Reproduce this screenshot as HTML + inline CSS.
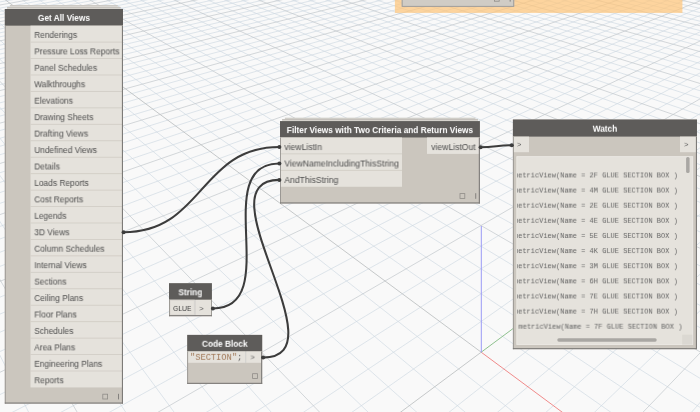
<!DOCTYPE html>
<html><head><meta charset="utf-8"><title>Dynamo</title>
<style>
html,body{margin:0;padding:0}
body{width:700px;height:412px;overflow:hidden;background:#f9f9f9;position:relative;font-family:"Liberation Sans",sans-serif;}
.grid{position:absolute;left:0;top:0}
.abs{position:absolute}
#root{position:absolute;left:0;top:0;width:700px;height:412px;will-change:transform}
.ic{position:absolute;border:1px solid #8f8c88;box-sizing:border-box;width:5.6px;height:5.6px}
.bar{position:absolute;width:1px;height:5.6px;background:#7c7a77}
.wires{position:absolute;left:0;top:0}
</style></head><body>
<svg class="grid" width="700" height="412" viewBox="0 0 700 412">
<path d="M31.1 417.0L-5.0 345.6M128.9 417.0L-5.0 214.1M177.7 417.0L-5.0 168.9M226.6 417.0L-5.0 132.2M275.5 417.0L-5.0 101.9M373.2 417.0L-5.0 54.6M422.1 417.0L-5.0 35.8M471.0 417.0L-5.0 19.4M519.8 417.0L-5.0 5.0M617.6 417.0L15.3 -5.0M666.4 417.0L31.8 -5.0M705.0 410.5L48.2 -5.0M705.0 381.3L64.7 -5.0M705.0 330.4L97.7 -5.0M705.0 308.0L114.2 -5.0M705.0 287.4L130.7 -5.0M705.0 268.3L147.2 -5.0M705.0 234.2L180.1 -5.0M705.0 218.8L196.6 -5.0M705.0 204.5L213.1 -5.0M705.0 191.1L229.6 -5.0M705.0 166.6L262.5 -5.0M705.0 155.4L279.0 -5.0M705.0 144.9L295.5 -5.0M705.0 134.9L312.0 -5.0M705.0 116.6L345.0 -5.0M705.0 108.1L361.4 -5.0M705.0 100.0L377.9 -5.0M705.0 92.3L394.4 -5.0M705.0 78.0L427.4 -5.0M705.0 71.3L443.9 -5.0M705.0 64.9L460.3 -5.0M705.0 58.8L476.8 -5.0M705.0 47.3L509.8 -5.0M705.0 42.0L526.3 -5.0M705.0 36.8L542.8 -5.0M705.0 31.8L559.3 -5.0M705.0 22.4L592.2 -5.0M705.0 18.0L608.7 -5.0M705.0 13.7L625.2 -5.0M705.0 9.6L641.7 -5.0M705.0 1.8L674.6 -5.0M705.0 -2.0L691.1 -5.0M-5.0 -3.1L6.0 -5.0M-5.0 -0.2L22.5 -5.0M-5.0 2.8L39.0 -5.0M-5.0 9.0L72.0 -5.0M-5.0 12.3L88.5 -5.0M-5.0 15.6L104.9 -5.0M-5.0 19.0L121.4 -5.0M-5.0 26.2L154.4 -5.0M-5.0 30.0L170.9 -5.0M-5.0 33.8L187.4 -5.0M-5.0 37.8L203.8 -5.0M-5.0 46.2L236.8 -5.0M-5.0 50.6L253.3 -5.0M-5.0 55.1L269.8 -5.0M-5.0 59.8L286.3 -5.0M-5.0 69.7L319.2 -5.0M-5.0 74.9L335.7 -5.0M-5.0 80.3L352.2 -5.0M-5.0 85.9L368.7 -5.0M-5.0 97.8L401.6 -5.0M-5.0 104.1L418.1 -5.0M-5.0 110.6L434.6 -5.0M-5.0 117.4L451.1 -5.0M-5.0 131.9L484.1 -5.0M-5.0 139.7L500.6 -5.0M-5.0 147.7L517.0 -5.0M-5.0 156.2L533.5 -5.0M-5.0 174.3L566.5 -5.0M-5.0 184.0L583.0 -5.0M-5.0 194.2L599.5 -5.0M-5.0 205.0L615.9 -5.0M-5.0 228.2L648.9 -5.0M-5.0 240.8L665.4 -5.0M-5.0 254.1L681.9 -5.0M-5.0 268.3L698.4 -5.0M-5.0 299.2L705.0 5.9M-5.0 316.2L705.0 13.3M-5.0 334.4L705.0 21.2M-5.0 353.8L705.0 29.6M-5.0 397.0L705.0 48.4M3.1 417.0L705.0 58.9M52.0 417.0L705.0 70.3M100.9 417.0L705.0 82.6M198.6 417.0L705.0 110.7M247.5 417.0L705.0 126.7M296.4 417.0L705.0 144.5M345.2 417.0L705.0 164.1M443.0 417.0L705.0 210.6M491.8 417.0L705.0 238.2M540.7 417.0L705.0 269.8M589.6 417.0L705.0 305.9M687.3 417.0L705.0 397.0" stroke="#cdd9e2" stroke-width="0.65" fill="none"/>
<path d="M80.0 417.0L-5.0 271.2M324.3 417.0L-5.0 76.3M705.0 354.7L81.2 -5.0M705.0 250.6L163.6 -5.0M705.0 178.5L246.1 -5.0M705.0 125.5L328.5 -5.0M705.0 85.0L410.9 -5.0M705.0 53.0L493.3 -5.0M705.0 27.0L575.7 -5.0M705.0 5.6L658.2 -5.0M-5.0 5.9L55.5 -5.0M-5.0 22.6L137.9 -5.0M-5.0 41.9L220.3 -5.0M-5.0 64.7L302.7 -5.0M-5.0 91.8L385.2 -5.0M-5.0 124.5L467.6 -5.0M-5.0 165.0L550.0 -5.0M-5.0 216.3L632.4 -5.0M-5.0 283.3L705.0 -1.1M-5.0 374.6L705.0 38.7M149.8 417.0L705.0 96.0M638.4 417.0L705.0 347.8" stroke="#c2c7cb" stroke-width="0.7" fill="none"/>
<path d="M481.2 352.2L-1.2 -5.0M481.2 352.2L394.1 417.0" stroke="#bcbfc1" stroke-width="0.85" fill="none"/>
<path d="M481.2 352.2L568.7 417.0" stroke="#f08a8a" stroke-width="1" fill="none"/>
<path d="M481.2 352.2L580.5 278.5" stroke="#8fc28f" stroke-width="1" fill="none"/>
<path d="M481.3 352.3L481.3 226" stroke="#9a9af5" stroke-width="1" fill="none"/>
</svg>
<svg class="grid" width="700" height="412" viewBox="0 0 700 412">
<rect x="394.90" y="0.00" width="287.50" height="12.90" fill="#ffc477" fill-opacity="0.70"/>
<rect x="401.70" y="-5.00" width="112.50" height="11.80" fill="#d0ccc5"/>
<rect x="402.15" y="-4.55" width="111.60" height="10.90" fill="none" stroke="#9a9895" stroke-width="0.9"/>
<rect x="494.40" y="-3.60" width="4.8" height="4.8" fill="none" stroke="#8f8c88" stroke-width="0.8"/><rect x="509.70" y="-4.00" width="0.9" height="5.6" fill="#7c7a77"/>
<rect x="9.90" y="5.30" width="107.80" height="2.70" fill="#dddad5"/>
<rect x="9.90" y="5.20" width="107.80" height="0.70" fill="#c4c1bb"/>
<rect x="7.00" y="7.00" width="113.60" height="3.00" fill="#d6d3cd"/>
<rect x="7.00" y="6.90" width="113.60" height="0.70" fill="#bab7b1"/>
<rect x="4.80" y="9.00" width="118.20" height="394.60" fill="#cbc6be"/>
<rect x="4.80" y="9.00" width="118.20" height="16.65" fill="#5e5c5a"/>
<rect x="30.50" y="25.65" width="92.50" height="16.45" fill="#e5e2dc"/>
<rect x="30.50" y="42.09" width="92.50" height="16.45" fill="#e5e2dc"/>
<rect x="30.50" y="41.64" width="92.50" height="0.90" fill="#d3cfc8"/>
<rect x="30.50" y="58.54" width="92.50" height="16.45" fill="#e5e2dc"/>
<rect x="30.50" y="58.09" width="92.50" height="0.90" fill="#d3cfc8"/>
<rect x="30.50" y="74.98" width="92.50" height="16.45" fill="#e5e2dc"/>
<rect x="30.50" y="74.53" width="92.50" height="0.90" fill="#d3cfc8"/>
<rect x="30.50" y="91.43" width="92.50" height="16.44" fill="#e5e2dc"/>
<rect x="30.50" y="90.98" width="92.50" height="0.90" fill="#d3cfc8"/>
<rect x="30.50" y="107.88" width="92.50" height="16.44" fill="#e5e2dc"/>
<rect x="30.50" y="107.42" width="92.50" height="0.90" fill="#d3cfc8"/>
<rect x="30.50" y="124.32" width="92.50" height="16.45" fill="#e5e2dc"/>
<rect x="30.50" y="123.87" width="92.50" height="0.90" fill="#d3cfc8"/>
<rect x="30.50" y="140.77" width="92.50" height="16.44" fill="#e5e2dc"/>
<rect x="30.50" y="140.32" width="92.50" height="0.90" fill="#d3cfc8"/>
<rect x="30.50" y="157.21" width="92.50" height="16.44" fill="#e5e2dc"/>
<rect x="30.50" y="156.76" width="92.50" height="0.90" fill="#d3cfc8"/>
<rect x="30.50" y="173.66" width="92.50" height="16.44" fill="#e5e2dc"/>
<rect x="30.50" y="173.21" width="92.50" height="0.90" fill="#d3cfc8"/>
<rect x="30.50" y="190.10" width="92.50" height="16.45" fill="#e5e2dc"/>
<rect x="30.50" y="189.65" width="92.50" height="0.90" fill="#d3cfc8"/>
<rect x="30.50" y="206.55" width="92.50" height="16.44" fill="#e5e2dc"/>
<rect x="30.50" y="206.10" width="92.50" height="0.90" fill="#d3cfc8"/>
<rect x="30.50" y="222.99" width="92.50" height="16.44" fill="#e5e2dc"/>
<rect x="30.50" y="222.54" width="92.50" height="0.90" fill="#d3cfc8"/>
<rect x="30.50" y="239.44" width="92.50" height="16.45" fill="#e5e2dc"/>
<rect x="30.50" y="238.99" width="92.50" height="0.90" fill="#d3cfc8"/>
<rect x="30.50" y="255.88" width="92.50" height="16.44" fill="#e5e2dc"/>
<rect x="30.50" y="255.43" width="92.50" height="0.90" fill="#d3cfc8"/>
<rect x="30.50" y="272.32" width="92.50" height="16.44" fill="#e5e2dc"/>
<rect x="30.50" y="271.88" width="92.50" height="0.90" fill="#d3cfc8"/>
<rect x="30.50" y="288.77" width="92.50" height="16.44" fill="#e5e2dc"/>
<rect x="30.50" y="288.32" width="92.50" height="0.90" fill="#d3cfc8"/>
<rect x="30.50" y="305.21" width="92.50" height="16.44" fill="#e5e2dc"/>
<rect x="30.50" y="304.76" width="92.50" height="0.90" fill="#d3cfc8"/>
<rect x="30.50" y="321.66" width="92.50" height="16.44" fill="#e5e2dc"/>
<rect x="30.50" y="321.21" width="92.50" height="0.90" fill="#d3cfc8"/>
<rect x="30.50" y="338.10" width="92.50" height="16.44" fill="#e5e2dc"/>
<rect x="30.50" y="337.65" width="92.50" height="0.90" fill="#d3cfc8"/>
<rect x="30.50" y="354.55" width="92.50" height="16.45" fill="#e5e2dc"/>
<rect x="30.50" y="354.10" width="92.50" height="0.90" fill="#d3cfc8"/>
<rect x="30.50" y="371.00" width="92.50" height="16.44" fill="#e5e2dc"/>
<rect x="30.50" y="370.55" width="92.50" height="0.90" fill="#d3cfc8"/>
<rect x="4.80" y="25.65" width="0.90" height="377.95" fill="#96938f"/>
<rect x="121.90" y="25.65" width="1.10" height="377.95" fill="#7d7b78"/>
<rect x="4.80" y="402.50" width="118.20" height="1.10" fill="#7d7b78"/>
<rect x="102.80" y="394.20" width="4.8" height="4.8" fill="none" stroke="#8f8c88" stroke-width="0.8"/><rect x="118.10" y="393.80" width="0.9" height="5.6" fill="#7c7a77"/>
<rect x="284.90" y="117.90" width="190.50" height="3.60" fill="#dddad5"/>
<rect x="284.90" y="117.80" width="190.50" height="0.70" fill="#c4c1bb"/>
<rect x="282.10" y="119.30" width="195.90" height="2.70" fill="#d6d3cd"/>
<rect x="282.10" y="119.20" width="195.90" height="0.70" fill="#bab7b1"/>
<rect x="280.00" y="121.10" width="199.90" height="82.40" fill="#cbc6be"/>
<rect x="280.00" y="121.10" width="199.90" height="16.35" fill="#5e5c5a"/>
<rect x="280.00" y="137.45" width="122.00" height="16.44" fill="#e5e2dc"/>
<rect x="280.00" y="153.89" width="122.00" height="16.44" fill="#e5e2dc"/>
<rect x="280.00" y="153.44" width="122.00" height="0.90" fill="#d3cfc8"/>
<rect x="280.00" y="170.34" width="122.00" height="16.44" fill="#e5e2dc"/>
<rect x="280.00" y="169.89" width="122.00" height="0.90" fill="#d3cfc8"/>
<rect x="427.00" y="137.45" width="52.90" height="16.45" fill="#e5e2dc"/>
<rect x="280.00" y="137.45" width="0.90" height="66.05" fill="#96938f"/>
<rect x="478.80" y="137.45" width="1.10" height="66.05" fill="#7d7b78"/>
<rect x="280.00" y="202.40" width="199.90" height="1.10" fill="#7d7b78"/>
<rect x="460.00" y="193.60" width="4.8" height="4.8" fill="none" stroke="#8f8c88" stroke-width="0.8"/><rect x="475.30" y="193.20" width="0.9" height="5.6" fill="#7c7a77"/>
<rect x="512.90" y="119.50" width="184.10" height="229.70" fill="#cbc6be"/>
<rect x="512.90" y="119.50" width="184.10" height="17.10" fill="#5e5c5a"/>
<rect x="512.90" y="136.60" width="16.10" height="15.60" fill="#e5e2dc"/>
<rect x="680.00" y="136.60" width="17.00" height="15.60" fill="#e5e2dc"/>
<rect x="516.50" y="156.30" width="176.60" height="188.70" fill="#e5e2dc"/>
<rect x="516.90" y="156.70" width="175.80" height="187.90" fill="none" stroke="#ebe9e4" stroke-width="0.8"/>
<rect x="686.10" y="157.00" width="3.50" height="16.00" fill="#a9a7a3" rx="1.6"/>
<rect x="557.30" y="338.20" width="99.40" height="3.50" fill="#a9a7a3" rx="1.6"/>
<rect x="682.20" y="334.70" width="10.10" height="9.90" fill="#dbd8d2"/>
<rect x="512.90" y="136.50" width="0.90" height="212.70" fill="#96938f"/>
<rect x="695.90" y="136.50" width="1.10" height="212.70" fill="#7d7b78"/>
<rect x="512.90" y="348.10" width="184.10" height="1.10" fill="#7d7b78"/>
<rect x="169.00" y="283.20" width="42.90" height="33.00" fill="#cbc6be"/>
<rect x="169.00" y="283.20" width="42.90" height="16.60" fill="#5e5c5a"/>
<rect x="169.00" y="299.80" width="25.70" height="16.40" fill="#e5e2dc"/>
<rect x="170.00" y="300.20" width="24.30" height="14.80" fill="none" stroke="#d6d3cd" stroke-width="0.8"/>
<rect x="194.70" y="299.80" width="0.90" height="16.40" fill="#d4d6d6"/>
<rect x="195.60" y="299.80" width="16.30" height="16.40" fill="#e5e2dc"/>
<rect x="169.00" y="299.80" width="0.90" height="16.40" fill="#96938f"/>
<rect x="211.00" y="299.80" width="0.90" height="16.40" fill="#96938f"/>
<rect x="169.00" y="315.10" width="42.90" height="1.10" fill="#7d7b78"/>
<rect x="187.20" y="334.90" width="75.00" height="49.00" fill="#cbc6be"/>
<rect x="187.20" y="334.90" width="75.00" height="16.50" fill="#5e5c5a"/>
<rect x="187.20" y="351.40" width="58.20" height="11.40" fill="#e5e2dc"/>
<rect x="245.40" y="351.40" width="0.80" height="11.40" fill="#d4d6d6"/>
<rect x="246.20" y="351.40" width="16.00" height="11.40" fill="#e5e2dc"/>
<rect x="187.20" y="351.40" width="0.90" height="32.50" fill="#96938f"/>
<rect x="261.10" y="351.40" width="1.10" height="32.50" fill="#7d7b78"/>
<rect x="187.20" y="382.80" width="75.00" height="1.10" fill="#7d7b78"/>
<rect x="252.60" y="373.70" width="4.8" height="4.8" fill="none" stroke="#8f8c88" stroke-width="0.8"/>
</svg>
<div id="root">
<div class="abs" style="left:-87px;top:11px;font-size:8.3px;line-height:12.0px;color:#fff;font-weight:bold;font-family:'Liberation Sans',sans-serif;white-space:pre;will-change:transform;width:300px;text-align:center;transform:translate(0.90px,0.92px) rotate(0.01deg);transform-origin:50% 50%;">Get All Views</div>
<div class="abs" style="left:34px;top:28px;font-size:8.4px;line-height:12.0px;color:#4c4c4c;font-weight:normal;font-family:'Liberation Sans',sans-serif;white-space:pre;will-change:transform;transform:translate(0.30px,0.94px) rotate(0.01deg);transform-origin:0 50%;">Renderings</div>
<div class="abs" style="left:34px;top:45px;font-size:8.4px;line-height:12.0px;color:#4c4c4c;font-weight:normal;font-family:'Liberation Sans',sans-serif;white-space:pre;will-change:transform;transform:translate(0.30px,0.38px) rotate(0.01deg);transform-origin:0 50%;">Pressure Loss Reports</div>
<div class="abs" style="left:34px;top:61px;font-size:8.4px;line-height:12.0px;color:#4c4c4c;font-weight:normal;font-family:'Liberation Sans',sans-serif;white-space:pre;will-change:transform;transform:translate(0.30px,0.83px) rotate(0.01deg);transform-origin:0 50%;">Panel Schedules</div>
<div class="abs" style="left:34px;top:78px;font-size:8.4px;line-height:12.0px;color:#4c4c4c;font-weight:normal;font-family:'Liberation Sans',sans-serif;white-space:pre;will-change:transform;transform:translate(0.30px,0.27px) rotate(0.01deg);transform-origin:0 50%;">Walkthroughs</div>
<div class="abs" style="left:34px;top:94px;font-size:8.4px;line-height:12.0px;color:#4c4c4c;font-weight:normal;font-family:'Liberation Sans',sans-serif;white-space:pre;will-change:transform;transform:translate(0.30px,0.72px) rotate(0.01deg);transform-origin:0 50%;">Elevations</div>
<div class="abs" style="left:34px;top:111px;font-size:8.4px;line-height:12.0px;color:#4c4c4c;font-weight:normal;font-family:'Liberation Sans',sans-serif;white-space:pre;will-change:transform;transform:translate(0.30px,0.16px) rotate(0.01deg);transform-origin:0 50%;">Drawing Sheets</div>
<div class="abs" style="left:34px;top:127px;font-size:8.4px;line-height:12.0px;color:#4c4c4c;font-weight:normal;font-family:'Liberation Sans',sans-serif;white-space:pre;will-change:transform;transform:translate(0.30px,0.61px) rotate(0.01deg);transform-origin:0 50%;">Drafting Views</div>
<div class="abs" style="left:34px;top:144px;font-size:8.4px;line-height:12.0px;color:#4c4c4c;font-weight:normal;font-family:'Liberation Sans',sans-serif;white-space:pre;will-change:transform;transform:translate(0.30px,0.05px) rotate(0.01deg);transform-origin:0 50%;">Undefined Views</div>
<div class="abs" style="left:34px;top:160px;font-size:8.4px;line-height:12.0px;color:#4c4c4c;font-weight:normal;font-family:'Liberation Sans',sans-serif;white-space:pre;will-change:transform;transform:translate(0.30px,0.50px) rotate(0.01deg);transform-origin:0 50%;">Details</div>
<div class="abs" style="left:34px;top:176px;font-size:8.4px;line-height:12.0px;color:#4c4c4c;font-weight:normal;font-family:'Liberation Sans',sans-serif;white-space:pre;will-change:transform;transform:translate(0.30px,0.94px) rotate(0.01deg);transform-origin:0 50%;">Loads Reports</div>
<div class="abs" style="left:34px;top:193px;font-size:8.4px;line-height:12.0px;color:#4c4c4c;font-weight:normal;font-family:'Liberation Sans',sans-serif;white-space:pre;will-change:transform;transform:translate(0.30px,0.39px) rotate(0.01deg);transform-origin:0 50%;">Cost Reports</div>
<div class="abs" style="left:34px;top:209px;font-size:8.4px;line-height:12.0px;color:#4c4c4c;font-weight:normal;font-family:'Liberation Sans',sans-serif;white-space:pre;will-change:transform;transform:translate(0.30px,0.83px) rotate(0.01deg);transform-origin:0 50%;">Legends</div>
<div class="abs" style="left:34px;top:226px;font-size:8.4px;line-height:12.0px;color:#4c4c4c;font-weight:normal;font-family:'Liberation Sans',sans-serif;white-space:pre;will-change:transform;transform:translate(0.30px,0.28px) rotate(0.01deg);transform-origin:0 50%;">3D Views</div>
<div class="abs" style="left:34px;top:242px;font-size:8.4px;line-height:12.0px;color:#4c4c4c;font-weight:normal;font-family:'Liberation Sans',sans-serif;white-space:pre;will-change:transform;transform:translate(0.30px,0.72px) rotate(0.01deg);transform-origin:0 50%;">Column Schedules</div>
<div class="abs" style="left:34px;top:259px;font-size:8.4px;line-height:12.0px;color:#4c4c4c;font-weight:normal;font-family:'Liberation Sans',sans-serif;white-space:pre;will-change:transform;transform:translate(0.30px,0.17px) rotate(0.01deg);transform-origin:0 50%;">Internal Views</div>
<div class="abs" style="left:34px;top:275px;font-size:8.4px;line-height:12.0px;color:#4c4c4c;font-weight:normal;font-family:'Liberation Sans',sans-serif;white-space:pre;will-change:transform;transform:translate(0.30px,0.61px) rotate(0.01deg);transform-origin:0 50%;">Sections</div>
<div class="abs" style="left:34px;top:292px;font-size:8.4px;line-height:12.0px;color:#4c4c4c;font-weight:normal;font-family:'Liberation Sans',sans-serif;white-space:pre;will-change:transform;transform:translate(0.30px,0.06px) rotate(0.01deg);transform-origin:0 50%;">Ceiling Plans</div>
<div class="abs" style="left:34px;top:308px;font-size:8.4px;line-height:12.0px;color:#4c4c4c;font-weight:normal;font-family:'Liberation Sans',sans-serif;white-space:pre;will-change:transform;transform:translate(0.30px,0.50px) rotate(0.01deg);transform-origin:0 50%;">Floor Plans</div>
<div class="abs" style="left:34px;top:324px;font-size:8.4px;line-height:12.0px;color:#4c4c4c;font-weight:normal;font-family:'Liberation Sans',sans-serif;white-space:pre;will-change:transform;transform:translate(0.30px,0.95px) rotate(0.01deg);transform-origin:0 50%;">Schedules</div>
<div class="abs" style="left:34px;top:341px;font-size:8.4px;line-height:12.0px;color:#4c4c4c;font-weight:normal;font-family:'Liberation Sans',sans-serif;white-space:pre;will-change:transform;transform:translate(0.30px,0.39px) rotate(0.01deg);transform-origin:0 50%;">Area Plans</div>
<div class="abs" style="left:34px;top:357px;font-size:8.4px;line-height:12.0px;color:#4c4c4c;font-weight:normal;font-family:'Liberation Sans',sans-serif;white-space:pre;will-change:transform;transform:translate(0.30px,0.84px) rotate(0.01deg);transform-origin:0 50%;">Engineering Plans</div>
<div class="abs" style="left:34px;top:374px;font-size:8.4px;line-height:12.0px;color:#4c4c4c;font-weight:normal;font-family:'Liberation Sans',sans-serif;white-space:pre;will-change:transform;transform:translate(0.30px,0.28px) rotate(0.01deg);transform-origin:0 50%;">Reports</div>
<div class="abs" style="left:229px;top:124px;font-size:8.3px;line-height:12.0px;color:#fff;font-weight:bold;font-family:'Liberation Sans',sans-serif;white-space:pre;will-change:transform;width:300px;text-align:center;transform:translate(0.95px,0.12px) rotate(0.01deg);transform-origin:50% 50%;">Filter Views with Two Criteria and Return Views</div>
<div class="abs" style="left:284px;top:141px;font-size:8.6px;line-height:12.0px;color:#4c4c4c;font-weight:normal;font-family:'Liberation Sans',sans-serif;white-space:pre;will-change:transform;transform:translate(0.40px,0.07px) rotate(0.01deg);transform-origin:0 50%;">viewListIn</div>
<div class="abs" style="left:284px;top:157px;font-size:8.6px;line-height:12.0px;color:#4c4c4c;font-weight:normal;font-family:'Liberation Sans',sans-serif;white-space:pre;will-change:transform;transform:translate(0.40px,0.52px) rotate(0.01deg);transform-origin:0 50%;">ViewNameIncludingThisString</div>
<div class="abs" style="left:284px;top:173px;font-size:8.6px;line-height:12.0px;color:#4c4c4c;font-weight:normal;font-family:'Liberation Sans',sans-serif;white-space:pre;will-change:transform;transform:translate(0.40px,0.96px) rotate(0.01deg);transform-origin:0 50%;">AndThisString</div>
<div class="abs" style="left:431px;top:141px;font-size:8.6px;line-height:12.0px;color:#4c4c4c;font-weight:normal;font-family:'Liberation Sans',sans-serif;white-space:pre;will-change:transform;transform:translate(0.30px,0.07px) rotate(0.01deg);transform-origin:0 50%;">viewListOut</div>
<div class="abs" style="left:454px;top:122px;font-size:8.3px;line-height:12.0px;color:#fff;font-weight:bold;font-family:'Liberation Sans',sans-serif;white-space:pre;will-change:transform;width:300px;text-align:center;transform:translate(0.95px,0.72px) rotate(0.01deg);transform-origin:50% 50%;">Watch</div>
<div class="abs" style="left:517px;top:138px;font-size:7.5px;line-height:12.0px;color:#555;font-weight:normal;font-family:'Liberation Sans',sans-serif;white-space:pre;will-change:transform;transform:translate(0.00px,0.90px) rotate(0.01deg);transform-origin:0 50%;">&gt;</div>
<div class="abs" style="left:684px;top:138px;font-size:7.5px;line-height:12.0px;color:#555;font-weight:normal;font-family:'Liberation Sans',sans-serif;white-space:pre;will-change:transform;transform:translate(0.10px,0.90px) rotate(0.01deg);transform-origin:0 50%;">&gt;</div>
<div class="abs" style="left:517.1px;top:156.3px;width:176.00px;height:188.70px;overflow:hidden"><div class="abs" style="left:-4px;top:13px;font-size:7px;line-height:12.0px;color:#636363;font-weight:normal;font-family:'Liberation Mono',monospace;white-space:pre;will-change:transform;transform:translate(0.90px,0.43px) rotate(0.01deg);transform-origin:0 50%;">metricView(Name = 2F GLUE SECTION BOX )</div><div class="abs" style="left:-4px;top:28px;font-size:7px;line-height:12.0px;color:#636363;font-weight:normal;font-family:'Liberation Mono',monospace;white-space:pre;will-change:transform;transform:translate(0.90px,0.56px) rotate(0.01deg);transform-origin:0 50%;">metricView(Name = 4M GLUE SECTION BOX )</div><div class="abs" style="left:-4px;top:43px;font-size:7px;line-height:12.0px;color:#636363;font-weight:normal;font-family:'Liberation Mono',monospace;white-space:pre;will-change:transform;transform:translate(0.90px,0.69px) rotate(0.01deg);transform-origin:0 50%;">metricView(Name = 2E GLUE SECTION BOX )</div><div class="abs" style="left:-4px;top:58px;font-size:7px;line-height:12.0px;color:#636363;font-weight:normal;font-family:'Liberation Mono',monospace;white-space:pre;will-change:transform;transform:translate(0.90px,0.82px) rotate(0.01deg);transform-origin:0 50%;">metricView(Name = 4E GLUE SECTION BOX )</div><div class="abs" style="left:-4px;top:73px;font-size:7px;line-height:12.0px;color:#636363;font-weight:normal;font-family:'Liberation Mono',monospace;white-space:pre;will-change:transform;transform:translate(0.90px,0.95px) rotate(0.01deg);transform-origin:0 50%;">metricView(Name = 5E GLUE SECTION BOX )</div><div class="abs" style="left:-4px;top:89px;font-size:7px;line-height:12.0px;color:#636363;font-weight:normal;font-family:'Liberation Mono',monospace;white-space:pre;will-change:transform;transform:translate(0.90px,0.08px) rotate(0.01deg);transform-origin:0 50%;">metricView(Name = 4K GLUE SECTION BOX )</div><div class="abs" style="left:-4px;top:104px;font-size:7px;line-height:12.0px;color:#636363;font-weight:normal;font-family:'Liberation Mono',monospace;white-space:pre;will-change:transform;transform:translate(0.90px,0.21px) rotate(0.01deg);transform-origin:0 50%;">metricView(Name = 3M GLUE SECTION BOX )</div><div class="abs" style="left:-4px;top:119px;font-size:7px;line-height:12.0px;color:#636363;font-weight:normal;font-family:'Liberation Mono',monospace;white-space:pre;will-change:transform;transform:translate(0.90px,0.34px) rotate(0.01deg);transform-origin:0 50%;">metricView(Name = 6H GLUE SECTION BOX )</div><div class="abs" style="left:-4px;top:134px;font-size:7px;line-height:12.0px;color:#636363;font-weight:normal;font-family:'Liberation Mono',monospace;white-space:pre;will-change:transform;transform:translate(0.90px,0.47px) rotate(0.01deg);transform-origin:0 50%;">metricView(Name = 7E GLUE SECTION BOX )</div><div class="abs" style="left:-4px;top:149px;font-size:7px;line-height:12.0px;color:#636363;font-weight:normal;font-family:'Liberation Mono',monospace;white-space:pre;will-change:transform;transform:translate(0.90px,0.60px) rotate(0.01deg);transform-origin:0 50%;">metricView(Name = 7H GLUE SECTION BOX )</div><div class="abs" style="left:1px;top:164px;font-size:7px;line-height:12.0px;color:#636363;font-weight:normal;font-family:'Liberation Mono',monospace;white-space:pre;will-change:transform;transform:translate(0.50px,0.73px) rotate(0.01deg);transform-origin:0 50%;">metricView(Name = 7F GLUE SECTION BOX )</div></div>
<div class="abs" style="left:40px;top:286px;font-size:8.3px;line-height:12.0px;color:#fff;font-weight:bold;font-family:'Liberation Sans',sans-serif;white-space:pre;will-change:transform;width:300px;text-align:center;transform:translate(0.45px,0.32px) rotate(0.01deg);transform-origin:50% 50%;">String</div>
<div class="abs" style="left:173px;top:302px;font-size:7.9px;line-height:12.0px;color:#3c3c3c;font-weight:normal;font-family:'Liberation Sans',sans-serif;white-space:pre;will-change:transform;transform:translate(0.00px,0.96px) rotate(0.01deg) scaleX(0.86);transform-origin:0 50%;">GLUE</div>
<div class="abs" style="left:199px;top:303px;font-size:7.5px;line-height:12.0px;color:#555;font-weight:normal;font-family:'Liberation Sans',sans-serif;white-space:pre;will-change:transform;transform:translate(0.30px,0.00px) rotate(0.01deg);transform-origin:0 50%;">&gt;</div>
<div class="abs" style="left:74px;top:337px;font-size:8.3px;line-height:12.0px;color:#fff;font-weight:bold;font-family:'Liberation Sans',sans-serif;white-space:pre;will-change:transform;width:300px;text-align:center;transform:translate(0.70px,0.82px) rotate(0.01deg);transform-origin:50% 50%;">Code Block</div>
<div class="abs" style="left:190px;top:351px;font-size:8.7px;line-height:12.0px;color:#a07858;font-weight:normal;font-family:'Liberation Mono',monospace;white-space:pre;will-change:transform;transform:translate(0.10px,0.88px) rotate(0.01deg);transform-origin:0 50%;">"SECTION"<span style="color:#555">;</span></div>
<div class="abs" style="left:250px;top:351px;font-size:7.5px;line-height:12.0px;color:#555;font-weight:normal;font-family:'Liberation Sans',sans-serif;white-space:pre;will-change:transform;transform:translate(0.40px,0.60px) rotate(0.01deg);transform-origin:0 50%;">&gt;</div>
</div>
<svg class="wires" width="700" height="412" viewBox="0 0 700 412" fill="none" stroke="#3c3c3c" stroke-width="2.05"><path d="M123.6 232.3C203.5 232.3 199.5 147.0 279.4 147.0"/><path d="M212.9 308.4C284.6 308.4 207.7 163.5 279.4 163.5"/><path d="M263.1 357.6C343.4 357.6 199.1 179.9 279.4 179.9"/><path d="M480.6 147.2C494.7 147.2 497.7 145.3 511.8 145.3"/><circle cx="123.6" cy="232.3" r="2" fill="#3c3c3c" stroke="none"/><circle cx="279.4" cy="147.0" r="2" fill="#3c3c3c" stroke="none"/><circle cx="212.9" cy="308.4" r="2" fill="#3c3c3c" stroke="none"/><circle cx="279.4" cy="163.5" r="2" fill="#3c3c3c" stroke="none"/><circle cx="263.1" cy="357.6" r="2" fill="#3c3c3c" stroke="none"/><circle cx="279.4" cy="179.9" r="2" fill="#3c3c3c" stroke="none"/><circle cx="480.6" cy="147.2" r="2" fill="#3c3c3c" stroke="none"/><circle cx="511.8" cy="145.3" r="2" fill="#3c3c3c" stroke="none"/></svg>
</body></html>
